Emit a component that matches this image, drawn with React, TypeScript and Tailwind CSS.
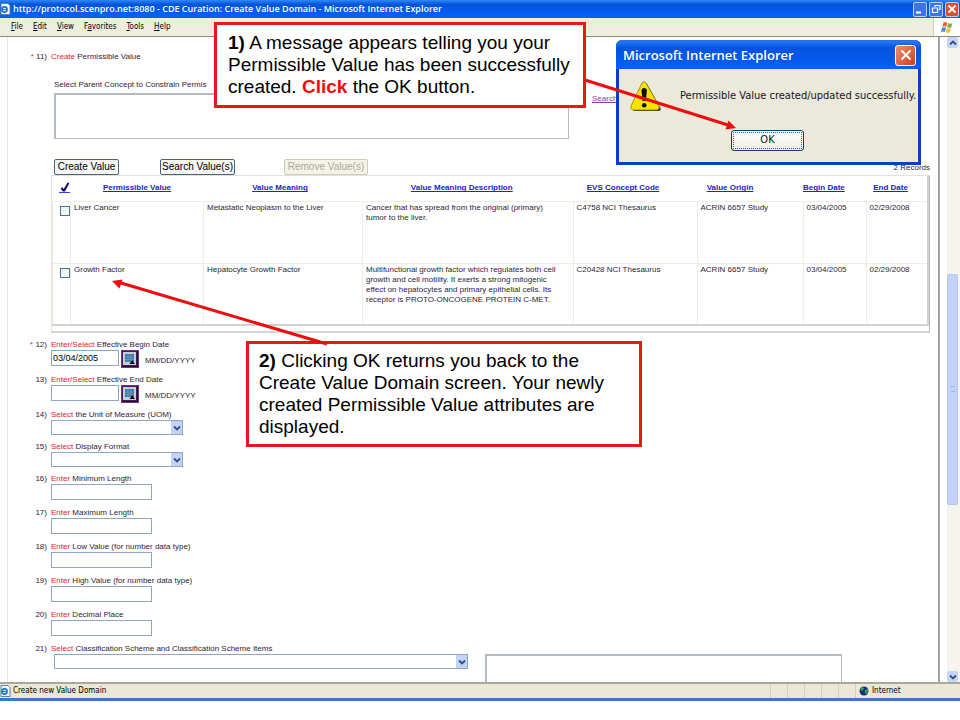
import type { ReactNode } from "react";

const ARIAL = "font-['Liberation_Sans',Arial,sans-serif]";
const TAHOMA = "font-['DejaVu_Sans_Condensed',Tahoma,sans-serif]";
const TREBUCHET = "font-['Open_Sans',sans-serif]";

const columns = [
  { name: "Permissible Value", pad: "pr-0" },
  { name: "Value Meaning", pad: "pr-[6px]" },
  { name: "Value Meaning Description", pad: "pr-3" },
  { name: "EVS Concept Code", pad: "pr-6" },
  { name: "Value Origin", pad: "pr-10" },
  { name: "Begin Date", pad: "pr-6" },
  { name: "End Date", pad: "pr-3" },
];

const rows = [
  {
    value: "Liver Cancer",
    meaning: "Metastatic Neoplasm to the Liver",
    description: "Cancer that has spread from the original (primary)\ntumor to the liver.",
    code: "C4758 NCI Thesaurus",
  },
  {
    value: "Growth Factor",
    meaning: "Hepatocyte Growth Factor",
    description:
      "Multifunctional growth factor which regulates both cell\ngrowth and cell motility. It exerts a strong mitogenic\neffect on hepatocytes and primary epithelial cells. Its\nreceptor is PROTO-ONCOGENE PROTEIN C-MET.",
    code: "C20428 NCI Thesaurus",
  },
];

const textFields = [
  { n: 16, label: "Minimum Length" },
  { n: 17, label: "Maximum Length" },
  { n: 18, label: "Low Value (for number data type)" },
  { n: 19, label: "High Value (for number data type)" },
  { n: 20, label: "Decimal Place" },
];

function PageIcon() {
  return (
    <svg viewBox="0 0 11 12" className="h-3 w-[11px] shrink-0">
      <path d="M1 .5h7l2 2v9H1z" fill="#f4f8ff" stroke="#5d7fae" />
      <circle cx="4.5" cy="6.5" r="2.6" fill="none" stroke="#1b74d8" strokeWidth="1.6" />
      <path d="M2 6.5h5" stroke="#1b74d8" strokeWidth="1.2" />
    </svg>
  );
}

function Chevron({ up = false }: { up?: boolean }) {
  return (
    <svg viewBox="0 0 8 6" className="h-[6px] w-2">
      <path d={up ? "M1 4.5 4 1.5l3 3" : "M1 1.5l3 3 3-3"} fill="none" stroke="#33507f" strokeWidth="1.8" />
    </svg>
  );
}

function CalendarIcon() {
  return (
    <svg viewBox="0 0 18 18" className="h-[18px] w-[18px]">
      <rect width="18" height="18" fill="#7b2f8b" />
      <path d="M1 17V16h15V1h1v16z" fill="#1d0f2c" />
      <rect x="1" y="1" width="15" height="15" fill="#3a2350" />
      <rect x="2" y="2" width="13" height="13" fill="#c9cdd3" />
      <rect x="4" y="4" width="9" height="8" fill="#3c78a8" />
      <path d="M4 7h9M4 9.500h9M7 4v8M10 4v8" stroke="#7fa8c8" strokeWidth=".6" />
      <path d="M8.500 14l2.700-4 2.700 4z" fill="#05050a" />
    </svg>
  );
}

function FlagIcon() {
  return (
    <svg viewBox="0 0 14 13" className="h-[13px] w-[14px]">
      <path d="M3.4 1.6q2-1.2 4 .1L6.3 5.9q-2-1.2-4 0z" fill="#e8643c" />
      <path d="M8.200 2q2 1.200 4.200.2l-1.100 4.200q-2 1-4.200-.2z" fill="#79b04a" />
      <path d="M2 6.900q2-1.200 4-.1l-1.100 4.200q-2-1.200-4 0z" fill="#4a84d8" />
      <path d="M6.800 7.100q2 1.200 4.200.2l-1.100 4.200q-2 1-4.200-.2z" fill="#f0bd3c" />
    </svg>
  );
}

function Field({ n, verb, label, id, required, className, children }: {
  n: number; verb: string; label: string; id: string; required?: boolean; className: string; children: ReactNode;
}) {
  return (
    <div className={`flex ${className}`}>
      <span className="w-[43px] shrink-0 pr-1 text-right leading-[11px]">
        {required && <span className="text-[#e8202c]">* </span>}
        {n})
      </span>
      <div className="min-w-0 grow">
        <label htmlFor={id} className="block leading-[11px]">
          <span className="text-[#e8202c]">{verb}</span> {label}
        </label>
        {children}
      </div>
    </div>
  );
}

function DropDown({ id, className }: { id: string; className: string }) {
  return (
    <div className={`relative h-[15px] ${className}`}>
      <select id={id} className="h-full w-full appearance-none border border-[#8ea6c2] bg-white">
        <option></option>
      </select>
      <span className="pointer-events-none absolute top-px right-px bottom-px flex w-[11px] items-center justify-center bg-[#c3d3f7]">
        <Chevron />
      </span>
    </div>
  );
}

function DateInput({ id, value }: { id: string; value: string }) {
  return (
    <div className="flex h-[18px] items-start">
      <input id={id} defaultValue={value} className={`h-4 w-[68px] border border-[#8ea6c2] bg-white px-px text-[9px] text-black ${ARIAL}`} />
      <button type="button" aria-label="Open calendar" className="ml-[2px]"><CalendarIcon /></button>
      <span className="ml-[6px] pt-[5px] leading-[11px]">MM/DD/YYYY</span>
    </div>
  );
}

const toolButton = "h-4 rounded-[2px] border text-[10px] leading-3";

function TitleButton({ close, children, label }: { close?: boolean; children: ReactNode; label: string }) {
  return (
    <button type="button" aria-label={label} className={`flex h-[15px] w-[14px] items-center justify-center rounded-[2px] border border-[#b9cdf5] ${close ? "bg-[#dc5230]" : "bg-[#3f74e6]"}`}>
      <svg viewBox="0 0 12 12" className="h-3 w-3" fill="none" stroke="#fff" strokeWidth="1.4">{children}</svg>
    </button>
  );
}

function AlertDialog() {
  return (
    <div role="alertdialog" aria-labelledby="dlg-title" aria-describedby="dlg-msg" className="absolute top-[40px] left-[616px] w-[305px] rounded-t-[6px] bg-[#0b3fc4] pb-[3px]">
      <div className="flex h-[29px] items-center justify-between rounded-t-[6px] border-t border-[#2b6fe8] bg-linear-to-b from-[#2a7bf5] via-[#0453e0] via-25% to-[#0560f5] pr-[5px] pl-[7px]">
        <h2 id="dlg-title" className={`pt-[2px] text-[13px] font-semibold text-white ${TREBUCHET}`}>Microsoft Internet Explorer</h2>
        <button type="button" aria-label="Close" className="flex h-[21px] w-[21px] items-center justify-center rounded-[3px] border border-white bg-linear-to-br from-[#ee8d70] to-[#cf3a18]">
          <svg viewBox="0 0 12 12" className="h-3 w-3"><path d="M1.500 1.500l9 9M10.500 1.500l-9 9" stroke="#fff" strokeWidth="2" /></svg>
        </button>
      </div>
      <div className={`mx-[3px] h-[93px] bg-[#ebe9d9] text-[11px] text-[#15151f] ${TAHOMA}`}>
        <div className="flex h-[61px] items-start pt-[11px] pl-[11px]">
          <svg viewBox="0 0 32 32" className="h-8 w-8 shrink-0">
            <path d="M17 4q-2-3-4 1L3 27q-1 4 2 4h24q3-1 1-4z" fill="#3c3a2c" />
            <path d="M16 3q-2-3-4 0L1 26q-1 3 2 4h24q3-1 2-4z" fill="#f5e400" stroke="#8a7b10" strokeWidth=".8" />
            <path d="M11.500 11q0-3 2.700-3t2.700 3l-1.200 10h-3z" fill="#111" />
            <circle cx="14.200" cy="25.300" r="2.300" fill="#111" />
          </svg>
          <p id="dlg-msg" className="pt-2 pl-[18px] leading-4 whitespace-nowrap">Permissible Value created/updated successfully.</p>
        </div>
        <div className="flex justify-center pr-[2px]">
          <button type="button" className="h-[21px] w-[73px] rounded-[3px] border border-[#123c74] bg-linear-to-b from-white to-[#eeede6] p-px">
            <span className="flex h-full items-center justify-center border border-dotted border-[#3c5c9c]">OK</span>
          </button>
        </div>
      </div>
    </div>
  );
}

export default function App() {
  return (
    <div className={`relative flex flex-col bg-white text-[8px] text-[#2d2438] ${ARIAL}`}>
      <header>
        <div className="flex h-[18px] items-center justify-between bg-linear-to-b from-[#3288f5] via-[#0353de] via-25% to-[#0563fa]">
          <div className="flex items-center gap-[2px]">
            <PageIcon />
            <h1 className={`text-[9px] font-semibold whitespace-nowrap text-white ${TREBUCHET}`}>
              http://protocol.scenpro.net:8080 - CDE Curation: Create Value Domain - Microsoft Internet Explorer
            </h1>
          </div>
          <div className="flex gap-[2px] pr-px">
            <TitleButton label="Minimize"><path d="M2 9.500h5" strokeWidth="2" /></TitleButton>
            <TitleButton label="Restore"><path d="M5 4V2.500h5v4H8.500M2.500 5h5v4.500h-5z" strokeWidth="1.200" /></TitleButton>
            <TitleButton label="Close" close><path d="M2.500 2.500l7 7M9.500 2.500l-7 7" strokeWidth="1.800" /></TitleButton>
          </div>
        </div>
        <nav className={`flex h-[18px] items-stretch justify-between bg-[#efedde] text-[8px] text-black ${TAHOMA}`}>
          <div className="flex items-center gap-[10px] pb-px pl-[11px]">
            <button type="button"><u>F</u>ile</button>
            <button type="button"><u>E</u>dit</button>
            <button type="button"><u>V</u>iew</button>
            <button type="button">F<u>a</u>vorites</button>
            <button type="button"><u>T</u>ools</button>
            <button type="button"><u>H</u>elp</button>
          </div>
          <div className="flex w-[27px] items-center justify-center border-l border-[#d0cdbd] bg-white"><FlagIcon /></div>
        </nav>
        <div className="h-px bg-[#8c8a7c]" />
      </header>

      <div className="flex h-[645px]">
        <main className="ml-[7px] min-w-0 grow overflow-hidden border-l border-[#e8e6da] border-r-2 border-r-[#a5a39d] pt-[14px] pr-2">
          <h2 className="flex h-[11px] leading-[11px]">
            <span className="w-[43px] pr-1 text-right"><span className="text-[#e8202c]">*</span> 11)</span>
            <span><span className="text-[#e8202c]">Create</span> Permissible Value</span>
          </h2>
          <div className="mt-[17px] ml-[46px]">
            <label htmlFor="parent" className="block leading-[11px]">Select Parent Concept to Constrain Permis</label>
            <div className="mt-[3px] flex items-start gap-[23px]">
              <textarea id="parent" className="block h-[46px] w-[515px] resize-none border border-t-2 border-l-2 border-[#b3bac0] bg-white" />
              <a href="#parent" className="leading-[11px] text-[#8b3aa0] underline">Search</a>
            </div>
          </div>
          <div className="mt-5 ml-[46px] flex h-4 items-start">
            <button type="button" className={`${toolButton} w-[65px] border-[#49637e] bg-[#f6f6f2] text-black`}>Create Value</button>
            <button type="button" className={`${toolButton} ml-[41px] w-[75px] border-[#49637e] bg-[#f6f6f2] text-black`}>Search Value(s)</button>
            <button type="button" disabled className={`${toolButton} ml-[49px] w-[84px] border-[#cdcbbb] bg-[#f4f3ea] text-[#aaa898]`}>Remove Value(s)</button>
            <span className="ml-auto pt-[3px] leading-[11px]">2 Records</span>
          </div>
          <div className="ml-[43px] border border-[#e4e2d8] border-r-[#b9bab5] border-b-2 border-b-[#d2d5d0] pb-[5px]">
            <table className="w-full table-fixed border-collapse border-r-2 border-b-2 border-[#d2d3ce]">
              <colgroup>
                <col className="w-[18px]" />
                <col className="w-[133px]" />
                <col className="w-[159px]" />
                <col />
                <col className="w-[124px]" />
                <col className="w-[106px]" />
                <col className="w-[63px]" />
                <col className="w-[62px]" />
              </colgroup>
              <thead>
                <tr className="h-[25px]">
                  <th className="p-0">
                    <a href="#all" aria-label="Select all" className="block">
                      <svg viewBox="0 0 12 12" className="ml-[6px] h-3 w-3">
                        <path d="M1.500 6l2.300-.6.900 1.600L8.500.8h2L6 9.500H3.600z" fill="#10106c" />
                        <path d="M0 10.500h11" stroke="#3a3ad8" />
                      </svg>
                    </a>
                  </th>
                  {columns.map((c) => (
                    <th key={c.name} className={`py-0 pl-0 text-center font-bold whitespace-nowrap ${c.pad}`}>
                      <a href="#sort" className="text-[#2222cc] underline">{c.name}</a>
                    </th>
                  ))}
                </tr>
              </thead>
              <tbody>
                {rows.map((r) => (
                  <tr key={r.value} className="h-[62px] align-top leading-[10px] *:border *:border-b-0 *:border-[#efede4] *:py-px *:pr-1 *:pl-[3px]">
                    <td>
                      <input type="checkbox" aria-label={r.value} className="mt-[3px] ml-1 block h-[10px] w-[10px] appearance-none border border-[#4b7193] bg-[#f3f5f2]" />
                    </td>
                    <td>{r.value}</td>
                    <td>{r.meaning}</td>
                    <td className="whitespace-pre-line">{r.description}</td>
                    <td>{r.code}</td>
                    <td>ACRIN 6657 Study</td>
                    <td>03/04/2005</td>
                    <td>02/29/2008</td>
                  </tr>
                ))}
              </tbody>
            </table>
          </div>

          <form className="mt-[6px]">
            <Field n={12} verb="Enter/Select" label="Effective Begin Date" id="f12" required className="h-[35px]">
              <DateInput id="f12" value="03/04/2005" />
            </Field>
            <Field n={13} verb="Enter/Select" label="Effective End Date" id="f13" className="h-[35px]">
              <DateInput id="f13" value="" />
            </Field>
            <Field n={14} verb="Select" label="the Unit of Measure (UOM)" id="f14" className="h-8">
              <DropDown id="f14" className="w-[132px]" />
            </Field>
            <Field n={15} verb="Select" label="Display Format" id="f15" className="h-8">
              <DropDown id="f15" className="w-[132px]" />
            </Field>
            {textFields.map((f) => (
              <Field key={f.n} n={f.n} verb="Enter" label={f.label} id={`f${f.n}`} className="h-[34px]">
                <input id={`f${f.n}`} className="block h-4 w-[101px] border border-[#8ea6c2] bg-white" />
              </Field>
            ))}
            <Field n={21} verb="Select" label="Classification Scheme and Classification Scheme Items" id="f21" className="">
              <div className="ml-[3px] flex items-start gap-[17px]">
                <DropDown id="f21" className="w-[414px]" />
                <textarea aria-label="Selected classification schemes" className="block h-12 w-[357px] resize-none border border-t-2 border-l-2 border-[#b3bac0] bg-white" />
              </div>
            </Field>
          </form>
        </main>
        <div className="ml-[7px] flex w-[13px] shrink-0 flex-col bg-[#f5f4ee] pr-[2px]">
          <button type="button" aria-label="Scroll up" className="flex h-[11px] items-center justify-center rounded-[2px] bg-[#c6d5fa]"><Chevron up /></button>
          <div className="grow-[227] basis-0" />
          <div className="flex grow-[229] basis-0 items-center justify-center rounded-[2px] border border-[#b4c6f0] bg-[#c3d2fb]">
            <span className="h-[6px] w-1 border-y border-[#9db3e8]" />
          </div>
          <div className="grow-[167] basis-0" />
          <button type="button" aria-label="Scroll down" className="flex h-[11px] items-center justify-center rounded-[2px] bg-[#c6d5fa]"><Chevron /></button>
        </div>
      </div>

      <footer className={`flex h-[19px] items-center justify-between border-t-2 border-b-[3px] border-t-[#aaa898] border-b-[#3d78c8] bg-[#ebe8d7] text-[8px] text-black ${TAHOMA}`}>
        <span className="flex items-center gap-[2px]"><PageIcon />Create new Value Domain</span>
        <div className="flex h-full">
          {[0, 1, 2, 3, 4].map((i) => (
            <span key={i} className="w-[17px] border-l border-[#d3d0c0]" />
          ))}
          <span className="flex w-[105px] items-center gap-[3px] border-l border-[#d3d0c0] pl-[3px]">
            <svg viewBox="0 0 10 10" className="h-[10px] w-[10px]">
              <circle cx="5" cy="5" r="4.500" fill="#14307c" />
              <path d="M2 2q3-2 3 1L3 5Q1 5 2 2M6 4l3-1q1 3-2 5-2-1-1-4" fill="#3a9c4c" />
            </svg>
            Internet
          </span>
        </div>
      </footer>

      <AlertDialog />
      <aside className="absolute top-[22px] left-[214px] w-[372px] border-[3px] border-[#ee1515] bg-white py-[7px] pl-[11px] text-[19px] leading-[22px] text-black">
        <b>1)</b> A message appears telling you your<br />Permissible Value has been successfully<br />created. <b className="text-[#ee0c0c]">Click</b> the OK button.
      </aside>
      <aside className="absolute top-[341px] left-[246px] w-[396px] border-[3px] border-[#ee1515] bg-white py-[6px] pl-[10px] text-[19px] leading-[22px] text-black">
        <b>2)</b> Clicking OK returns you back to the<br />Create Value Domain screen. Your newly<br />created Permissible Value attributes are<br />displayed.
      </aside>
      <svg viewBox="0 0 960 360" className="pointer-events-none absolute top-0 left-0 h-[360px] w-[960px]" stroke="#ee0c0c" fill="#ee0c0c">
        <path d="M585 80 728 125M327 344 121 283" strokeWidth="3" />
        <path d="M736 128 725.500 129.500 728.500 120.500zM112 281 122.500 279.500 119.500 288.500z" stroke="none" />
      </svg>
    </div>
  );
}
